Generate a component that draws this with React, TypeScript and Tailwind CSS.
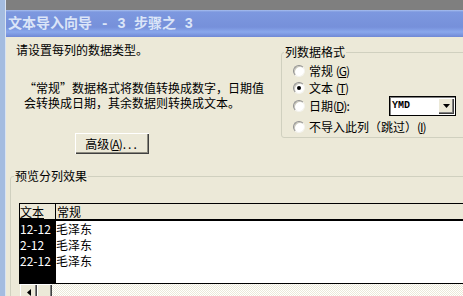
import React from "react";

const Radio = ({ checked = false }: { checked?: boolean }) => (
    <span className="relative w-[12px] h-[12px] shrink-0 rounded-full bg-white border border-t-[#8f8f8f] border-l-[#8f8f8f] border-b-[#f4f3ee] border-r-[#f4f3ee] shadow-[inset_1px_1px_0_#c9c7ba] flex items-center justify-center">
        {checked && <span className="w-[4px] h-[4px] rounded-full bg-black" />}
    </span>
);

const Key = ({ k }: { k: string }) => (
    <span className="tracking-[-1px]">
        (<span className="underline underline-offset-1">{k}</span>)
    </span>
);

export default function App() {
    return (
        <div className="w-[463px] h-[296px] overflow-hidden flex bg-[#ece9d8] text-black text-[12px] leading-[14px] font-['Noto_Sans_CJK_SC','Noto_Sans',sans-serif]">
            <div className="w-[6px] shrink-0 bg-[#a4bce0] border-r border-[#d8e3f3]" />
            <div className="flex-1 flex flex-col min-w-0">
                <div className="h-[10px] shrink-0 bg-[#7f7f7f]" />
                <div className="h-[27px] shrink-0 flex items-center pl-[2px] bg-[linear-gradient(to_bottom,#a8bfee_0px,#7d98df_2px,#7690da_17px,#89a7ec_22px,#6f88d5_27px)]">
                    <span className="whitespace-pre text-[14px] font-bold text-[#dbe5f8] font-['Liberation_Mono','Noto_Sans_CJK_SC',monospace]">
                        文本导入向导 - 3 步骤之 3
                    </span>
                </div>

                <div className="flex-1 flex flex-col">
                    <div className="flex">
                        {/* left column */}
                        <div className="w-[275px] shrink-0 pl-[10px] pt-[6px]">
                            <p className="whitespace-nowrap">请设置每列的数据类型。</p>
                            <p className="mt-[23px] ml-[8px] leading-[15px] whitespace-nowrap">
                                “常规”数据格式将数值转换成数字，日期值
                                <br />
                                会转换成日期，其余数据则转换成文本。
                            </p>
                            <button className="mt-[23px] ml-[59px] w-[74px] h-[21px] flex items-center justify-center bg-[#ece9d8] shadow-[inset_1px_1px_0_#ffffff,inset_-1px_-1px_0_#404040,inset_-2px_-2px_0_#8d8b80]">
                                高级<Key k="A" /><span className="tracking-[2px] ml-[1px]">...</span>
                            </button>
                        </div>

                        {/* column format group */}
                        <div className="relative mt-[15px] w-[200px] h-[86px] shrink-0 border border-[#d0d0bf] rounded-[3px] pt-[9px] pl-[11px]">
                            <span className="absolute left-[2px] top-[-8px] px-[1px] bg-[#ece9d8]">列数据格式</span>
                            <div className="h-[18px] flex items-center gap-[4px]">
                                <Radio />
                                <span>常规 <Key k="G" /></span>
                            </div>
                            <div className="h-[16px] flex items-center gap-[4px]">
                                <Radio checked />
                                <span>文本 <Key k="T" /></span>
                            </div>
                            <div className="h-[20px] flex items-center gap-[4px]">
                                <Radio />
                                <span className="w-[76px]">日期<Key k="D" />:</span>
                                <div className="w-[67px] h-[20px] flex items-center bg-white border border-black shadow-[inset_1px_1px_0_#808080]">
                                    <span className="flex-1 pl-[2px] text-[10px] font-bold font-['Liberation_Mono',monospace]">YMD</span>
                                    <span className="w-[16px] h-[16px] mr-[1px] flex items-center justify-center bg-[#ece9d8] shadow-[inset_1px_1px_0_#ffffff,inset_-1px_-1px_0_#404040,inset_-2px_-2px_0_#808080]">
                                        <svg width="7" height="4" viewBox="0 0 7 4">
                                            <path d="M0 0h7L3.5 4z" fill="#000" />
                                        </svg>
                                    </span>
                                </div>
                            </div>
                            <div className="h-[22px] flex items-center gap-[4px]">
                                <Radio />
                                <span className="whitespace-nowrap">不导入此列（跳过）<Key k="I" /></span>
                            </div>
                        </div>
                    </div>

                    {/* preview group */}
                    <div className="relative mt-[22px] ml-[4px] w-[520px] h-[200px] shrink-0 border border-[#d0d0bf] rounded-[3px] pt-[26px] pl-[8px]">
                        <span className="absolute left-[3px] top-[-8px] px-[1px] bg-[#ece9d8]">预览分列效果</span>
                        <div className="border-t border-l border-black">
                            <div className="h-[17px] flex bg-[#ece9d8] border-b-2 border-black leading-[15px]">
                                <span className="w-[36px] border-r border-black">
                                    <span className="underline underline-offset-1">文本</span>
                                </span>
                                <span className="pl-[1px]">常规</span>
                            </div>
                            <div className="h-[63px] flex bg-white border-b border-black leading-[16px]">
                                <div className="w-[36px] bg-black text-white">
                                    <div>12-12</div>
                                    <div>2-12</div>
                                    <div>22-12</div>
                                </div>
                                <div>
                                    <div>毛泽东</div>
                                    <div>毛泽东</div>
                                    <div>毛泽东</div>
                                </div>
                            </div>
                        </div>
                        <div className="h-[16px] flex pl-[1px]">
                            <span className="w-[17px] h-[16px] flex items-center justify-center bg-[#ece9d8] shadow-[inset_1px_1px_0_#ffffff,inset_-1px_-1px_0_#404040,inset_-2px_-2px_0_#808080]">
                                <svg width="4" height="7" viewBox="0 0 4 7">
                                    <path d="M4 0v7L0 3.5z" fill="#000" />
                                </svg>
                            </span>
                            <span className="w-[15px] h-[16px] bg-[#ece9d8] shadow-[inset_1px_1px_0_#ffffff,inset_-1px_-1px_0_#404040,inset_-2px_-2px_0_#808080]" />
                            <span className="flex-1 bg-[repeating-conic-gradient(#ffffff_0%_25%,#ece9d8_0%_50%)] bg-[length:2px_2px]" />
                        </div>
                    </div>
                </div>
            </div>
        </div>
    );
}
